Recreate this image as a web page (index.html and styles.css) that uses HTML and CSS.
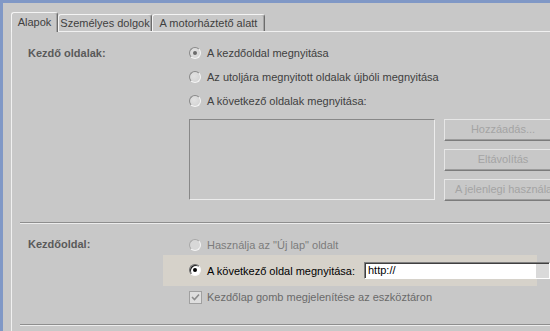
FILE: index.html
```html
<!DOCTYPE html>
<html lang="hu">
<head>
<meta charset="utf-8">
<title>Beállítások</title>
<link rel="stylesheet" href="styles.css">
</head>
<body>
<div class="window">
  <div class="tabs">
    <div class="tab active t1">Alapok</div>
    <div class="tab t2">Személyes dolgok</div>
    <div class="tab t3">A motorháztető alatt</div>
  </div>
  <div class="panel">
    <section class="group g1">
      <div class="label">Kezdő oldalak:</div>
      <div class="options">
        <div class="opt"><span class="radio on"></span>A kezdőoldal megnyitása</div>
        <div class="opt"><span class="radio"></span>Az utoljára megnyitott oldalak újbóli megnyitása</div>
        <div class="opt"><span class="radio"></span>A következő oldalak megnyitása:</div>
        <div class="listrow">
          <div class="listbox"></div>
          <div class="buttons">
            <div class="btn">Hozzáadás...</div>
            <div class="btn">Eltávolítás</div>
            <div class="btn left">A jelenlegi használata</div>
          </div>
        </div>
      </div>
    </section>
    <div class="sep"></div>
    <section class="group g2">
      <div class="label short">Kezdőoldal:</div>
      <div class="options">
        <div class="opt short disabled"><span class="radio dis"></span>Használja az "Új lap" oldalt</div>
        <div class="band">
          <span class="radio active-on"></span><span class="bandtext">A következő oldal megnyitása:</span>
          <div class="field">http://</div>
        </div>
        <div class="opt check"><span class="checkbox"><svg width="9" height="9" viewBox="0 0 9 9"><path d="M1 4 L3.5 6.5 L8 1.5" fill="none" stroke="#8c8c8c" stroke-width="1.6"/></svg></span>Kezdőlap gomb megjelenítése az eszköztáron</div>
      </div>
    </section>
    <div class="sep last"></div>
  </div>
</div>
</body>
</html>
```

FILE: styles.css
```css
* { box-sizing: border-box; margin: 0; padding: 0; }
html, body { width: 550px; height: 331px; overflow: hidden; }
body {
  background: #c8c8c8;
  font: 11px "Liberation Sans", Arial, sans-serif;
  color: #404040;
}
.window {
  height: 331px;
  border-top: 3px solid #8098c6;
  border-left: 3px solid #8098c6;
  background: #c8c8c8;
}
.tabs {
  display: flex;
  align-items: flex-end;
  height: 28px;
  padding-left: 8px;
}
.tab {
  height: 17px;
  border: 1px solid #f4f4f4;
  border-bottom: none;
  border-right-color: #6c6c6c;
  border-radius: 3px 3px 0 0;
  text-align: center;
  line-height: 16px;
  color: #404040;
  white-space: nowrap;
  box-shadow: inset -1px 0 0 #a4a4a4;
}
.tab.active {
  height: 20px;
  margin-bottom: -1px;
  position: relative;
  z-index: 1;
  background: #c8c8c8;
  line-height: 18px;
}
.t1 { width: 47px; }
.t2 { width: 94px; }
.t3 { width: 113px; }
.panel {
  height: 300px;
  margin-left: 8px;
  border-top: 1px solid #f0f0f0;
  border-left: 1px solid #f0f0f0;
}
.group {
  display: grid;
  grid-template-columns: 161px 1fr;
  padding-left: 16px;
}
.g1 { padding-top: 9px; }
.g2 { padding-top: 10px; }
.label {
  font-weight: bold;
  color: #5a5a5a;
  height: 24px;
  line-height: 24px;
}
.label.short { height: 21px; line-height: 21px; }
.opt {
  display: flex;
  align-items: center;
  height: 24px;
  white-space: nowrap;
  color: #404040;
}
.opt.short { height: 21px; }
.opt.disabled { color: #7c7c7c; }
.opt.check { height: 22px; color: #6a6a6a; }
.radio {
  flex: none;
  width: 12px;
  height: 12px;
  margin-right: 6px;
  border-radius: 50%;
  border: 1px solid;
  border-color: #8a8a8a #f4f4f4 #f4f4f4 #8a8a8a;
  background: radial-gradient(circle at 40% 40%, #e2e2e2, #d0d0d0);
  display: flex;
  align-items: center;
  justify-content: center;
}
.radio.on::after {
  content: "";
  width: 4px;
  height: 4px;
  border-radius: 50%;
  background: #6a6a6a;
}
.radio.dis {
  border-color: #a8a8a8 #f4f4f4 #f4f4f4 #a8a8a8;
  background: #d8d8d8;
}
.radio.active-on {
  border-color: #6a6a6a #f8f8f8 #f8f8f8 #6a6a6a;
  background: #fff;
  box-shadow: inset 1px 1px 0 #202020;
}
.radio.active-on::after {
  content: "";
  width: 4px;
  height: 4px;
  border-radius: 50%;
  background: #000;
}
.listrow {
  display: flex;
  gap: 9px;
  margin-top: 6px;
}
.listbox {
  width: 246px;
  height: 81px;
  border: 1px solid;
  border-color: #888 #ececec #ececec #888;
  background: #c8c8c8;
}
.buttons {
  display: flex;
  flex-direction: column;
  gap: 8px;
}
.btn {
  width: 118px;
  height: 22px;
  border: 1px solid;
  border-color: #e6e6e6 #7c7c7c #7c7c7c #e6e6e6;
  box-shadow: inset 0 -1px 0 #9c9c9c;
  color: #a4a4a4;
  text-align: center;
  line-height: 19px;
  white-space: nowrap;
  overflow: hidden;
}
.btn.left { text-align: left; padding-left: 10px; }
.sep {
  height: 2px;
  margin: 21px 0 0 8px;
  border-top: 1px solid #8e8e8e;
  border-bottom: 1px solid #ececec;
}
.sep.last { margin-top: 16px; }
.band {
  display: flex;
  align-items: center;
  height: 31px;
  width: 374px;
  margin-left: -26px;
  padding-left: 26px;
  background: #d6d2ca;
  white-space: nowrap;
  color: #000;
}
.band .radio { margin-top: -2px; }
.bandtext { width: 157px; flex: none; }
.field {
  flex: none;
  width: 186px;
  height: 17px;
  border: 1px solid;
  border-color: #808080 #fff #fff #808080;
  box-shadow: inset 1px 1px 0 #404040;
  background: linear-gradient(to right, #fff 171px, #dadada 171px);
  padding-left: 3px;
  line-height: 15px;
  color: #000;
}
.checkbox {
  flex: none;
  width: 13px;
  height: 13px;
  margin-right: 5px;
  border: 1px solid #a0a0a0;
  background: #dedede;
  display: flex;
  align-items: center;
  justify-content: center;
}
```
